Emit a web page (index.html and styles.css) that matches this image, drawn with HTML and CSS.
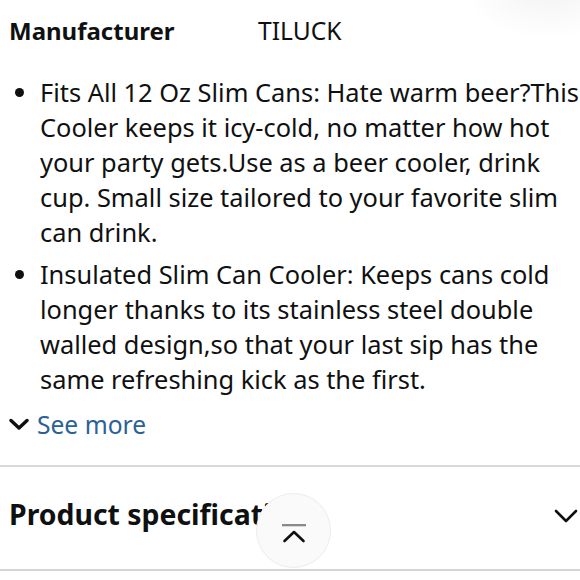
FILE: index.html
```html
<!DOCTYPE html>
<html>
<head>
<meta charset="utf-8">
<link rel="stylesheet" href="styles.css">
</head>
<body>
<div class="page">
  <div class="corner-shade"></div>
  <div class="attr-row">
    <span class="attr-name">Manufacturer</span>
    <span class="attr-value">TILUCK</span>
  </div>
  <ul class="bullets">
    <li>Fits All 12 Oz Slim Cans: Hate warm beer?This<br>Cooler keeps it icy-cold, no matter how hot<br>your party gets.Use as a beer cooler, drink<br>cup. Small size tailored to your favorite slim<br>can drink.</li>
    <li>Insulated Slim Can Cooler: Keeps cans cold<br>longer thanks to its stainless steel double<br>walled design,so that your last sip has the<br>same refreshing kick as the first.</li>
  </ul>
  <div class="see-more">
    <svg class="see-more-icon" width="20" height="13" viewBox="0 0 20 13"><path d="M2 2.5 L10 10 L18 2.5" fill="none" stroke="#0f1111" stroke-width="3.4" stroke-linecap="round" stroke-linejoin="round"/></svg>
    <span class="see-more-text">See more</span>
  </div>
  <div class="divider"></div>
  <div class="section-head">
    <span class="section-title">Product specifications</span>
    <svg class="section-chevron" width="24" height="16" viewBox="0 0 24 16"><path d="M2 3 L12 13 L22 3" fill="none" stroke="#0f1111" stroke-width="2.6" stroke-linecap="round" stroke-linejoin="round"/></svg>
  </div>
  <div class="divider bottom"></div>
  <div class="to-top">
    <svg width="26" height="22" viewBox="0 0 26 22"><path d="M1 1 H25" stroke="#8a8a8a" stroke-width="2.6"/><path d="M3.5 17 L13 8 L22.5 17" fill="none" stroke="#111" stroke-width="2.6" stroke-linecap="round" stroke-linejoin="round"/></svg>
  </div>
</div>
</body>
</html>
```
FILE: styles.css
```css
html, body {
  margin: 0;
  padding: 0;
  background: #ffffff;
}
body {
  font-family: "Noto Sans", "Open Sans", sans-serif;
  color: #0f1111;
  width: 580px;
  height: 580px;
  overflow: hidden;
}
.page {
  position: relative;
  width: 580px;
  height: 580px;
  overflow: hidden;
}
.corner-shade {
  position: absolute;
  right: -60px;
  top: -70px;
  width: 180px;
  height: 110px;
  border-radius: 50%;
  background: radial-gradient(ellipse at center, rgba(0,0,0,0.05), rgba(0,0,0,0) 70%);
}
.attr-row {
  display: flex;
  padding: 13px 0 0 9px;
  font-size: 24px;
  line-height: 35px;
  height: 40px;
}
.attr-name {
  font-weight: 700;
  width: 249px;
}
.attr-value {
  font-weight: 400;
  font-size: 24.6px;
}
.bullets {
  margin: 0;
  padding: 0 0 0 40px;
  margin-top: 22px;
  font-size: 25.4px;
  line-height: 35px;
  white-space: nowrap;
}
.bullets li {
  margin-bottom: 7px;
}
.see-more {
  display: flex;
  align-items: center;
  gap: 8px;
  padding-left: 9px;
  margin-top: 4px;
  height: 40px;
}
.see-more-text {
  font-size: 24.6px;
  color: #2a6196;
}
.divider {
  height: 2px;
  background: #d9d9d9;
  margin-top: 21px;
}
.section-head {
  display: flex;
  align-items: center;
  justify-content: space-between;
  height: 102px;
  box-sizing: border-box;
  padding: 0 2px 8px 9px;
}
.section-chevron {
  margin-top: 4px;
}
.section-title {
  font-size: 28.4px;
  font-weight: 700;
}
.divider.bottom {
  margin-top: 0;
  background: #d4d4d4;
}
.to-top {
  position: absolute;
  left: 256px;
  top: 493px;
  width: 73px;
  height: 73px;
  border-radius: 50%;
  background: #fafafa;
  border: 1px solid #ececec;
  display: flex;
  align-items: center;
  justify-content: center;
}
.to-top svg {
  margin-top: 8px;
}
```
